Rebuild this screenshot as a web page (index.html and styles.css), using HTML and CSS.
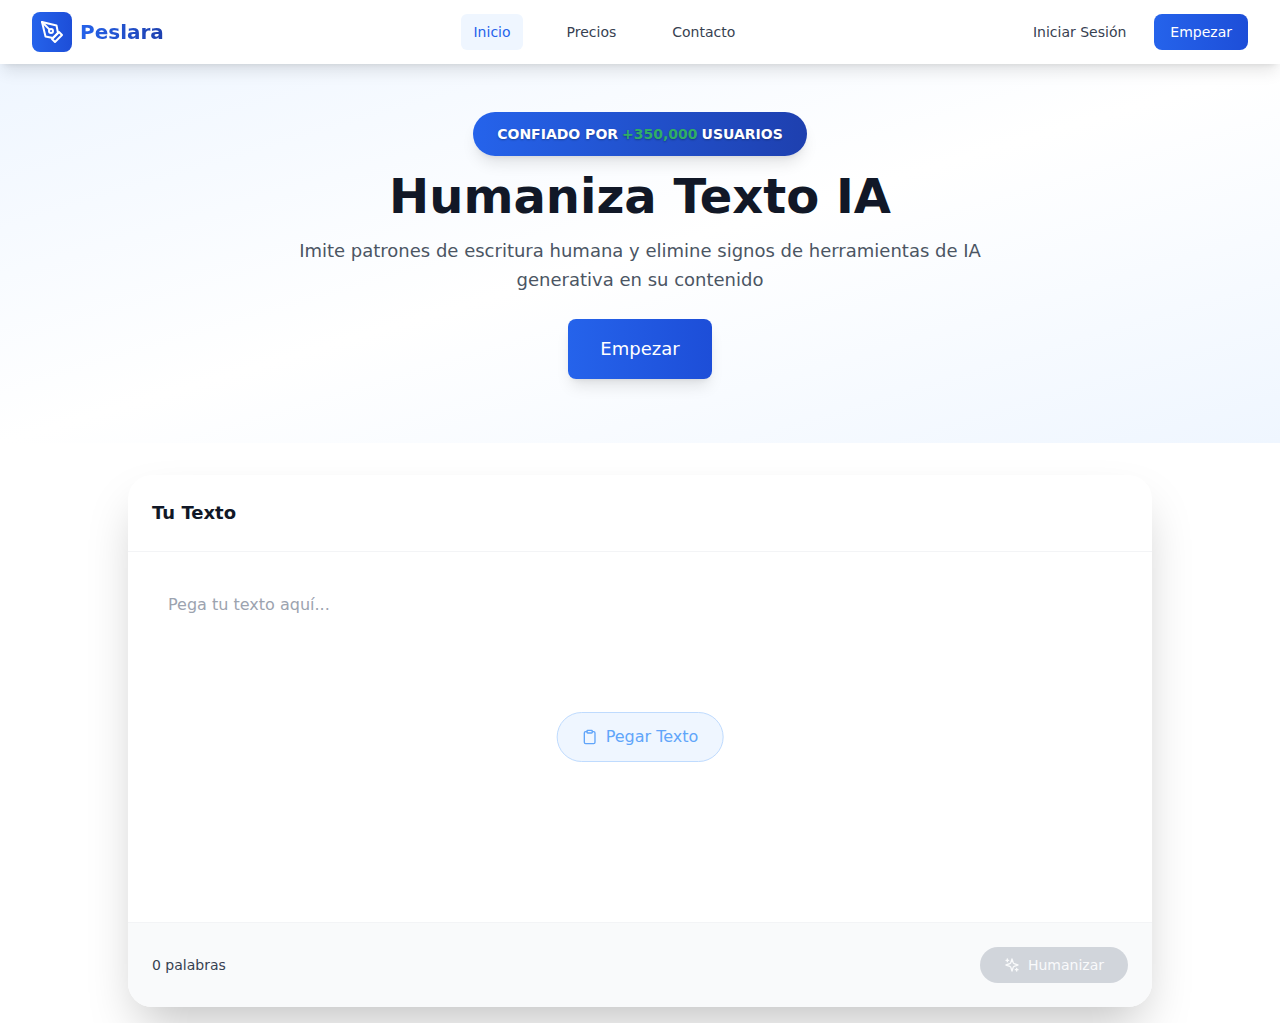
FILE: index.html
```
<!DOCTYPE html>
<html lang="es">
<head>
  <meta charset="UTF-8" />
  <meta name="viewport" content="width=device-width, initial-scale=1.0" />
  <title>Peslara | Humaniza Texto IA</title>
  <link rel="stylesheet" href="styles.css">
</head>
<body>
  <header class="site-header">
    <a href="#" class="logo">
      <span class="logo-mark">
        <svg class="icon" width="24" height="24" viewBox="0 0 24 24" aria-hidden="true">
          <path d="m12 19 7-7 3 3-7 7-3-3z" />
          <path d="m18 13-1.5-7.5L2 2l3.5 14.5L13 18l5-5z" />
          <path d="m2 2 7.586 7.586" />
          <circle cx="11" cy="11" r="2" />
        </svg>
      </span>
      <span class="logo-text">Peslara</span>
    </a>
    <nav class="main-nav">
      <a href="#" class="nav-link active">Inicio</a>
      <a href="#" class="nav-link">Precios</a>
      <a href="#" class="nav-link">Contacto</a>
    </nav>
    <div class="header-actions">
      <a href="#" class="nav-link">Iniciar Sesión</a>
      <button type="button" class="btn btn-small">Empezar</button>
    </div>
  </header>

  <main>
    <section class="hero">
      <div class="badge">
        <span>CONFIADO POR</span>
        <span class="badge-count">+350,000</span>
        <span>USUARIOS</span>
      </div>
      <h1>Humaniza Texto IA</h1>
      <p class="subtitle">Imite patrones de escritura humana y elimine signos de herramientas de IA generativa en su contenido</p>
      <button type="button" class="btn btn-large">Empezar</button>
    </section>

    <section class="editor-section">
      <div class="editor">
        <div class="editor-header">
          <h2><label for="texto">Tu Texto</label></h2>
        </div>
        <div class="editor-body">
          <textarea id="texto" placeholder="Pega tu texto aquí..."></textarea>
          <button type="button" class="paste-btn">
            <svg class="icon" width="16" height="16" viewBox="0 0 24 24" aria-hidden="true">
              <rect x="8" y="2" width="8" height="4" rx="1" />
              <path d="M16 4h2a2 2 0 0 1 2 2v14a2 2 0 0 1-2 2H6a2 2 0 0 1-2-2V6a2 2 0 0 1 2-2h2" />
            </svg>
            Pegar Texto
          </button>
        </div>
        <div class="editor-footer">
          <span>0 palabras</span>
          <button type="button" class="humanize-btn" disabled>
            <svg class="icon" width="16" height="16" viewBox="0 0 24 24" aria-hidden="true">
              <path d="m12 3-1.912 5.813a2 2 0 0 1-1.275 1.275L3 12l5.813 1.912a2 2 0 0 1 1.275 1.275L12 21l1.912-5.813a2 2 0 0 1 1.275-1.275L21 12l-5.813-1.912a2 2 0 0 1-1.275-1.275L12 3Z" />
              <path d="M5 3v4M19 17v4M3 5h4M17 19h4" />
            </svg>
            Humanizar
          </button>
        </div>
      </div>
    </section>
  </main>
</body>
</html>
```
FILE: styles.css
```
* {
  box-sizing: border-box;
}

body {
  margin: 0;
  background-color: #ffffff;
  color: #111827;
  font-family: "DejaVu Sans", sans-serif;
  font-size: 16px;
  line-height: 24px;
}

h1, h2, p {
  margin: 0;
}

a {
  text-decoration: none;
}

button {
  font-family: inherit;
  border: none;
  cursor: pointer;
}

.icon {
  fill: none;
  stroke: currentColor;
  stroke-width: 2;
  stroke-linecap: round;
  stroke-linejoin: round;
}

/* Header */
.site-header {
  position: sticky;
  top: 0;
  z-index: 10;
  display: flex;
  align-items: center;
  justify-content: space-between;
  height: 64px;
  padding: 0 32px;
  background-color: #ffffff;
  box-shadow: 0 10px 15px -3px rgba(0, 0, 0, 0.1), 0 4px 6px -4px rgba(0, 0, 0, 0.1);
}

.logo {
  display: flex;
  align-items: center;
  gap: 8px;
}

.logo-mark {
  display: flex;
  align-items: center;
  justify-content: center;
  width: 40px;
  height: 40px;
  border-radius: 8px;
  background: linear-gradient(to right, #2563eb, #1d4ed8);
  color: #ffffff;
}

.logo-text {
  font-size: 20px;
  line-height: 28px;
  font-weight: bold;
  background: linear-gradient(to right, #2563eb, #1e40af);
  -webkit-background-clip: text;
  background-clip: text;
  color: transparent;
}

.main-nav {
  display: flex;
  gap: 32px;
  margin-left: 24px;
}

.nav-link {
  padding: 8px 12px;
  border-radius: 6px;
  font-size: 14px;
  line-height: 20px;
  color: #374151;
}

.nav-link.active {
  background-color: #eff6ff;
  color: #2563eb;
}

.header-actions {
  display: flex;
  align-items: center;
  gap: 16px;
}

.btn {
  border-radius: 8px;
  background: linear-gradient(to right, #2563eb, #1d4ed8);
  color: #ffffff;
}

.btn-small {
  padding: 8px 16px;
  font-size: 14px;
  line-height: 20px;
}

.btn-large {
  margin-top: 25px;
  padding: 16px 32px;
  font-size: 18px;
  line-height: 28px;
  box-shadow: 0 10px 15px -3px rgba(0, 0, 0, 0.1), 0 4px 6px -4px rgba(0, 0, 0, 0.1);
}

/* Hero */
.hero {
  display: flex;
  flex-direction: column;
  align-items: center;
  padding: 48px 32px 64px;
  text-align: center;
  background: linear-gradient(to bottom right, #eff6ff, #ffffff, #eff6ff);
}

.badge {
  display: flex;
  gap: 4px;
  padding: 12px 24px;
  border-radius: 22px;
  background: linear-gradient(to right, #2563eb, #1e40af);
  box-shadow: 0 10px 15px -3px rgba(0, 0, 0, 0.1), 0 4px 6px -4px rgba(0, 0, 0, 0.1);
  color: #ffffff;
  font-size: 14px;
  line-height: 20px;
  font-weight: bold;
  text-shadow: 0 1px 2px rgba(0, 0, 0, 0.3);
}

.badge-count {
  color: #2fae66;
}

h1 {
  margin-top: 16px;
  font-size: 48px;
  line-height: 48px;
}

.subtitle {
  max-width: 768px;
  margin-top: 16px;
  font-size: 18px;
  line-height: 29px;
  color: #4b5563;
}

/* Editor */
.editor-section {
  padding: 32px 32px 16px;
}

.editor {
  max-width: 1024px;
  margin: 0 auto;
  border-radius: 24px;
  background-color: #ffffff;
  box-shadow: 0 25px 50px -12px rgba(0, 0, 0, 0.25);
  overflow: hidden;
}

.editor-header {
  padding: 24px;
  border-bottom: 1px solid #f3f4f6;
}

.editor-header h2 {
  font-size: 18px;
  line-height: 28px;
}

.editor-body {
  position: relative;
  padding: 25px 24px;
}

.editor-body textarea {
  display: block;
  width: 100%;
  height: 320px;
  padding: 16px;
  border: none;
  outline: none;
  resize: none;
  background: transparent;
  color: #374151;
  font-family: inherit;
  font-size: 16px;
  line-height: 24px;
}

.editor-body textarea::placeholder {
  color: #9ca3af;
}

/* sits over the empty textarea */
.paste-btn {
  position: absolute;
  top: 50%;
  left: 50%;
  transform: translate(-50%, -50%);
  display: flex;
  align-items: center;
  gap: 8px;
  padding: 12px 24px;
  border: 1px solid #bfdbfe;
  border-radius: 25px;
  background-color: #eff6ff;
  color: #60a5fa;
  font-size: 16px;
  line-height: 24px;
  white-space: nowrap;
}

.editor-footer {
  display: flex;
  align-items: center;
  justify-content: space-between;
  padding: 24px;
  border-top: 1px solid #f3f4f6;
  background-color: #f9fafb;
  color: #374151;
  font-size: 14px;
  line-height: 20px;
}

.humanize-btn {
  display: flex;
  align-items: center;
  gap: 8px;
  padding: 8px 24px;
  border-radius: 18px;
  background-color: #d1d5db;
  color: #f9fafb;
  font-size: 14px;
  line-height: 20px;
  cursor: not-allowed;
}
```
